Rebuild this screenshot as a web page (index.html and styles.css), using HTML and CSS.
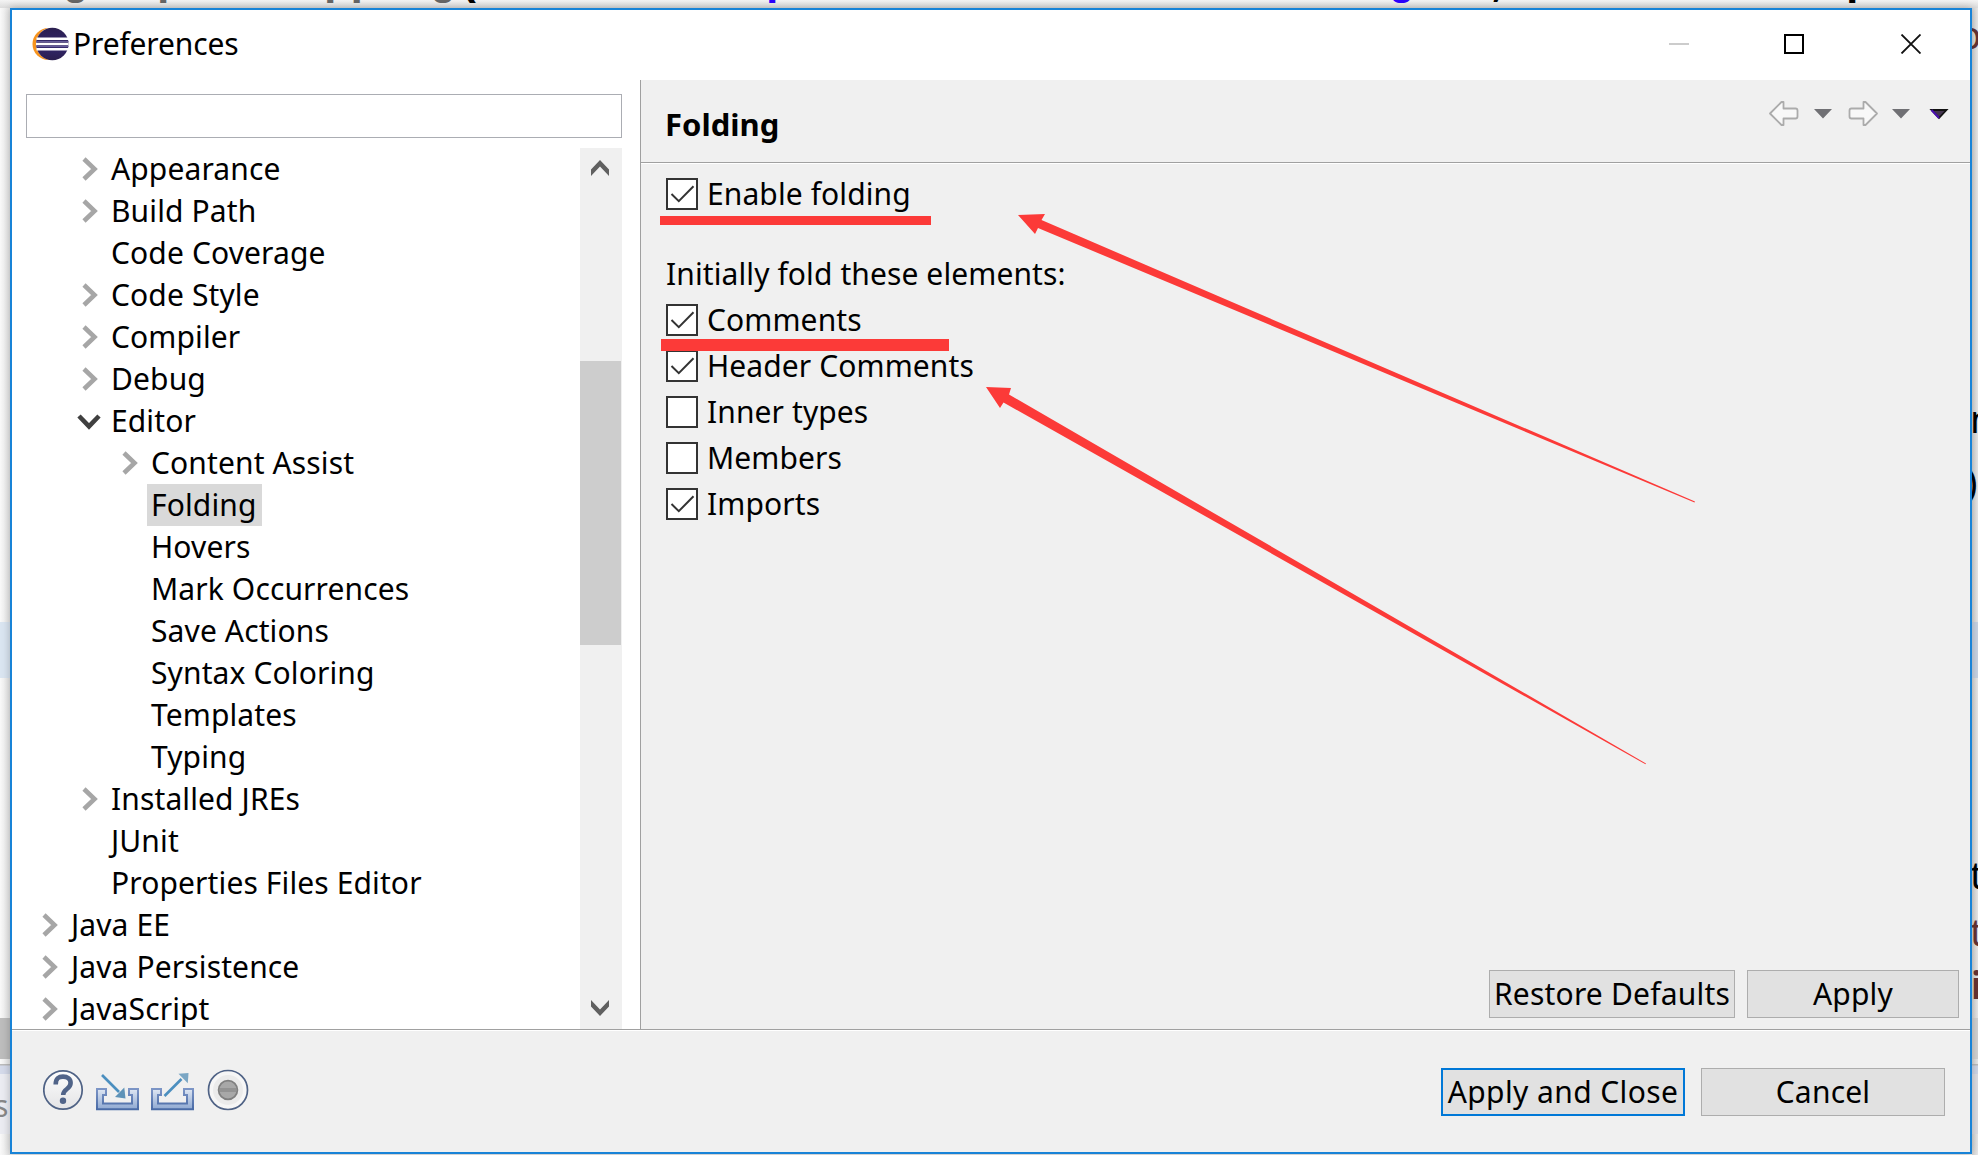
FILE: index.html
```html
<!DOCTYPE html>
<html lang="en">
<head>
<meta charset="utf-8">
<title>Preferences</title>
<link rel="stylesheet" href="styles.css">
</head>
<body>
<svg width="0" height="0" class="defs" aria-hidden="true">
  <defs>
    <linearGradient id="tray" x1="0" y1="0" x2="0" y2="1"><stop offset="0" stop-color="#dfe7f3"/><stop offset="1" stop-color="#8fa9d2"/></linearGradient>
    <linearGradient id="trayEdge" x1="0" y1="0" x2="0" y2="1"><stop offset="0" stop-color="#7c95c6"/><stop offset="1" stop-color="#4a6ba6"/></linearGradient>
    <linearGradient id="disc" x1="0" y1="0" x2="0" y2="1"><stop offset="0" stop-color="#fdfdfd"/><stop offset="1" stop-color="#e4e4e6"/></linearGradient>
    <linearGradient id="planet" x1="0" y1="0" x2="0" y2="1"><stop offset="0" stop-color="#2b1f50"/><stop offset=".6" stop-color="#32266a"/><stop offset="1" stop-color="#2a1d4e"/></linearGradient>
    <symbol id="chev" viewBox="0 0 16 24"><path d="M2 2 L12.5 12 L2 22" fill="none" stroke="#a6a6a6" stroke-width="4.6"/></symbol>
    <symbol id="open" viewBox="0 0 24 16"><path d="M2 2 L12 12.4 L22 2" fill="none" stroke="#404040" stroke-width="4.6"/></symbol>
    <symbol id="check" viewBox="0 0 28 28"><path d="M3.5 14 L10.8 21.2 L25.5 6.2" fill="none" stroke="#333" stroke-width="2"/></symbol>
  </defs>
</svg>
<div class="desktop">
  <span class="behind b1">g</span><span class="behind b2">p</span><span class="behind b3">pping</span><span class="behind b4">(</span>
  <span class="behind blue b5">p</span><span class="behind blue b6">g</span><span class="behind b7">,</span><span class="behind b8">p</span>
  <div class="strip left"></div>
  <div class="strip right"></div>
  <span class="behind side b9">s</span>
  <span class="behind side r1">n</span><span class="behind side r2">)</span><span class="behind side r3">t</span><span class="behind side brown r4">t</span><span class="behind side brown r5">i</span><span class="behind side brown r6">p</span>
</div>
<main class="window">
  <header class="titlebar">
    <svg class="logo" width="37" height="34" viewBox="0 0 37 34"><circle cx="16.5" cy="17" r="16" fill="#f7941e"/><circle cx="20.5" cy="17" r="16.4" fill="#fff"/><circle cx="20.3" cy="17" r="16.2" fill="url(#planet)"/><path d="M4.500 11.800h31.500M4 17h32.500M4.500 22.200h31.500" stroke="#fff" stroke-width="2.600"/><path d="M4 14.400h32.500M4 19.600h32.500" stroke="#6d64a0" stroke-width="1"/></svg>
    <h1>Preferences</h1>
    <svg class="wctl" width="252" height="20" viewBox="0 0 252 20" fill="none"><path d="M0 10h20" stroke="#ccc" stroke-width="2"/><path d="M116 1h18v18h-18z" stroke="#000" stroke-width="2"/><path d="M232.5.5l19 19M251.5.5l-19 19" stroke="#111" stroke-width="1.8"/></svg>
  </header>
  <div class="body">
    <aside class="side-pane">
      <input class="filter" type="text" aria-label="filter">
      <div class="tree-wrap">
        <ul class="tree">
          <li class="l1"><svg><use href="#chev"/></svg><span>Appearance</span></li>
          <li class="l1"><svg><use href="#chev"/></svg><span>Build Path</span></li>
          <li class="l1"><span>Code Coverage</span></li>
          <li class="l1"><svg><use href="#chev"/></svg><span>Code Style</span></li>
          <li class="l1"><svg><use href="#chev"/></svg><span>Compiler</span></li>
          <li class="l1"><svg><use href="#chev"/></svg><span>Debug</span></li>
          <li class="l1"><svg class="down"><use href="#open"/></svg><span>Editor</span></li>
          <li class="l2"><svg><use href="#chev"/></svg><span>Content Assist</span></li>
          <li class="l2"><span class="sel">Folding</span></li>
          <li class="l2"><span>Hovers</span></li>
          <li class="l2"><span>Mark Occurrences</span></li>
          <li class="l2"><span>Save Actions</span></li>
          <li class="l2"><span>Syntax Coloring</span></li>
          <li class="l2"><span>Templates</span></li>
          <li class="l2"><span>Typing</span></li>
          <li class="l1"><svg><use href="#chev"/></svg><span>Installed JREs</span></li>
          <li class="l1"><span>JUnit</span></li>
          <li class="l1"><span>Properties Files Editor</span></li>
          <li class="l0"><svg><use href="#chev"/></svg><span>Java EE</span></li>
          <li class="l0"><svg><use href="#chev"/></svg><span>Java Persistence</span></li>
          <li class="l0"><svg><use href="#chev"/></svg><span>JavaScript</span></li>
        </ul>
        <div class="scrollbar">
          <svg width="18" height="16" viewBox="0 0 18 16"><path d="M9 0l9 9.5v6.5l-9-9.5-9 9.5v-6.5z" fill="#606060"/></svg>
          <div class="thumb"></div>
          <svg width="18" height="16" viewBox="0 0 18 16"><path d="M9 16l9-9.5v-6.5l-9 9.5-9-9.5v6.5z" fill="#606060"/></svg>
        </div>
      </div>
    </aside>
    <section class="page">
      <div class="page-head">
        <h2>Folding</h2>
        <svg class="nav" width="181" height="25" viewBox="0 0 181 25"><g fill="#f8f8f8" stroke="#ababab" stroke-width="1.8" stroke-linejoin="round"><path d="M1 12.500 L12.500 1h2v6.500h12q2 0 2 2v6q0 2-2 2h-12v6.500h-2z"/><path d="M108 12.500 L96.500 1h-2v6.500h-12q-2 0-2 2v6q0 2 2 2h12v6.500h2z"/></g><path d="M45 8h18l-9 9.500zM123 8h18l-9 9.500z" fill="#707074"/><path d="M162.500 9h15l-7.500 8z" fill="#453550" stroke="#111" stroke-width="1.800"/><path d="M162.500 9l7.500 8" stroke="#4a10b0" stroke-width="2"/></svg>
      </div>
      <div class="options">
        <label class="opt first"><i class="box"><svg><use href="#check"/></svg></i>Enable folding</label>
        <p>Initially fold these elements:</p>
        <label class="opt"><i class="box"><svg><use href="#check"/></svg></i>Comments</label>
        <label class="opt"><i class="box"><svg><use href="#check"/></svg></i>Header Comments</label>
        <label class="opt"><i class="box"></i>Inner types</label>
        <label class="opt"><i class="box"></i>Members</label>
        <label class="opt"><i class="box"><svg><use href="#check"/></svg></i>Imports</label>
      </div>
      <div class="page-actions"><button class="restore">Restore Defaults</button><button class="apply">Apply</button></div>
    </section>
  </div>
  <footer class="footer">
    <svg class="tools" width="208" height="42" viewBox="0 0 208 42">
      <circle cx="20" cy="21" r="19.200" fill="url(#disc)" stroke="#4f6285" stroke-width="1.700"/>
      <path d="M12.700 15.500 C12.700 9 16 7.600 20 7.600 C24.500 7.600 27.600 10 27.600 14 C27.600 20.500 20.200 19.500 20.200 26" fill="none" stroke="#516489" stroke-width="4.600"/><circle cx="20" cy="31.800" r="3.200" fill="#516489"/>
      <path d="M54 20h9v6h-3v8.500h29v-8.500h-3v-6h9v20.200h-41z" fill="url(#tray)" stroke="url(#trayEdge)" stroke-width="2"/>
      <path d="M59 6l17 17" stroke="#4b8fbf" stroke-width="2.600"/><path d="M82.500 29.500l-10.500-1.500 9.300-9.500z" fill="#5f93b8"/>
      <path d="M109 20h9v6h-3v8.500h29v-8.500h-3v-6h9v20.200h-41z" fill="url(#tray)" stroke="url(#trayEdge)" stroke-width="2"/>
      <path d="M121.500 27l17-17" stroke="#4b8fbf" stroke-width="2.600"/><path d="M145.500 4l-10 .8 9.300 9.500z" fill="#7aa6c4"/>
      <circle cx="185" cy="21" r="19.500" fill="#f6f6f6" stroke="#4f6285" stroke-width="1.700"/><circle cx="185" cy="21" r="15" fill="#ebebeb"/><circle cx="185" cy="21" r="9.400" fill="#a8a8a8" stroke="#808080" stroke-width="1.800"/><path d="M177 21h16" stroke="#939393" stroke-width="4"/>
    </svg>
    <button class="primary">Apply and Close</button><button class="cancel">Cancel</button>
  </footer>
</main>
<svg class="marks" width="1978" height="1155" viewBox="0 0 1978 1155" fill="#fc3a38"><path d="M660 216h271v9H660zM661 339h288v12H661z"/><path d="M1018 215l27-1-3.500 6L1695 501.500l-.500 1L1038 228l-3 6z"/><path d="M986 387l25 1-2 6.500L1646 763.500l-.500 .800L1003.500 402.500l-3.500 5.500z"/></svg>
</body>
</html>
```
FILE: styles.css
```css
* { box-sizing: border-box; }
body { margin: 0; width: 1978px; height: 1155px; overflow: hidden; position: relative; background: #f2f2f2; color: #000; font: 30px/42px "Noto Sans", "Open Sans", sans-serif; }
.defs { position: absolute; }
h1, h2, p, ul { margin: 0; padding: 0; font-size: inherit; font-weight: normal; }
button { font: inherit; color: #000; background: #e1e1e1; border: 1px solid #adadad; padding: 0; height: 48px; line-height: 44px; white-space: nowrap; letter-spacing: .2px; }

.desktop { position: absolute; inset: 0; overflow: hidden; background: linear-gradient(#f4f4f4, #dcdcdc 8px, #eee 9px); }
.behind { position: absolute; top: -38px; font: bold 44px/40px "Liberation Mono", monospace; color: #666; }
.blue { color: #2a00ff; }
.b1 { left: 62px; } .b2 { left: 157px; } .b3 { left: 324px; } .b4 { left: 456px; color: #000; }
.b5 { left: 766px; } .b6 { left: 1388px; } .b7 { left: 1488px; color: #000; } .b8 { left: 1846px; color: #000; }
.strip { position: absolute; top: 8px; bottom: 0; }
.left { left: 0; width: 10px; background: linear-gradient(#fff0 614px, #dae5f1 614px 670px, #fff0 670px 1010px, #bdbdbd 1010px 1051px, #fff0 1051px 1056px, #bbb 1056px 1057px, #d4daea 1058px 1066px, #ebecf2 1066px 1126px, #fff0 1126px), linear-gradient(90deg, #f9f9f9, #e6e6e6); }
.right { left: 1972px; width: 6px; background: linear-gradient(#fff0 614px, #c8d3e3 614px 670px, #fff0 670px 1010px, #d2d2d2 1010px 1051px, #fff0 1051px 1056px, #bbb 1056px 1057px, #ced5e6 1058px 1066px, #dcdde3 1066px 1126px, #fff0 1126px), linear-gradient(90deg, #d6d6d6, #e8e8e8); }
.side { left: 1970px; font: 38px/40px "Noto Sans", sans-serif; color: #000; }
.brown { color: #633; }
.side.b9 { left: -6px; top: 1086px; font-size: 30px; color: #888; }
.r1 { top: 398px; } .r2 { left: 1966px; top: 461px; } .r3 { top: 854px; } .r4 { top: 911px; } .side.r5 { top: 964px; left: 1971px; font-weight: bold; } .side.r6 { left: 1958px; top: 14px; }

.window { position: relative; left: 10px; top: 8px; width: 1962px; height: 1146px; border: 2px solid #1883d7; background: #f0f0f0; display: flex; flex-direction: column; box-shadow: 0 0 8px rgba(0,0,0,.25); }
.titlebar { height: 70px; background: #fff; display: flex; align-items: center; padding: 0 49px 2px 20px; flex: none; }
.titlebar h1 { margin-left: 4px; letter-spacing: -.15px; }
.wctl { margin-left: auto; }
.body { height: 949px; display: flex; flex: none; }
.side-pane { width: 629px; background: #fff; border-right: 1px solid #a0a0a0; padding: 14px 18px 0 14px; }
.filter { display: block; width: 596px; height: 44px; border: 1px solid #abadb3; background: #fff; margin-bottom: 10px; }
.tree-wrap { display: flex; height: 881px; overflow: hidden; }
.tree { flex: 1; list-style: none; letter-spacing: .12px; }
.tree li { height: 42px; display: flex; align-items: center; }
.tree svg { width: 16px; height: 24px; margin: 0 9px 0 -25px; flex: none; }
.tree svg.down { width: 24px; height: 16px; margin: 2px 6px 0 -30px; }
.tree span { padding: 0 6px 0 4px; height: 42px; white-space: nowrap; }
.l0 { padding-left: 41px; } .l1 { padding-left: 81px; } .l2 { padding-left: 121px; }
.sel { background: #d9d9d9; }
.scrollbar { width: 42px; background: #f0f0f0; display: flex; flex-direction: column; align-items: center; padding: 12px 2px 13px 0; }
.thumb { align-self: flex-start; width: 41px; height: 284px; background: #cdcdcd; margin: 185px 0 auto; flex: none; }
.page { flex: 1; display: flex; flex-direction: column; }
.page-head { height: 83px; border-bottom: 1px solid #a0a0a0; box-shadow: 0 1px #fff; display: flex; justify-content: space-between; padding: 0 20px 0 24px; }
.page-head h2 { font-weight: bold; font-size: 31px; padding-top: 23px; }
.nav { margin-top: 21px; }
.options { padding: 10px 0 0 25px; letter-spacing: .1px; }
.opt { display: flex; align-items: center; height: 42px; margin-bottom: 4px; gap: 9px; }
.first { margin-bottom: 38px; }
.options p { height: 42px; margin-bottom: 4px; }
.box { width: 32px; height: 32px; border: 2px solid #333; background: #fff; flex: none; }
.box svg { display: block; width: 28px; height: 28px; }
.page-actions { margin-top: auto; display: flex; justify-content: flex-end; gap: 12px; padding: 0 11px 11px 0; }
.restore { width: 246px; } .apply { width: 212px; }
.footer { flex: 1; border-top: 1px solid #a0a0a0; box-shadow: inset 0 1px #fff; display: flex; align-items: flex-start; padding: 38px 25px 0 31px; }
.tools { margin-right: auto; margin-top: 1px; }
.primary { width: 244px; border: 2px solid #0078d7; margin-right: 16px; line-height: 42px; letter-spacing: .4px; }
.cancel { width: 244px; }
.marks { position: absolute; left: 0; top: 0; pointer-events: none; }
```
